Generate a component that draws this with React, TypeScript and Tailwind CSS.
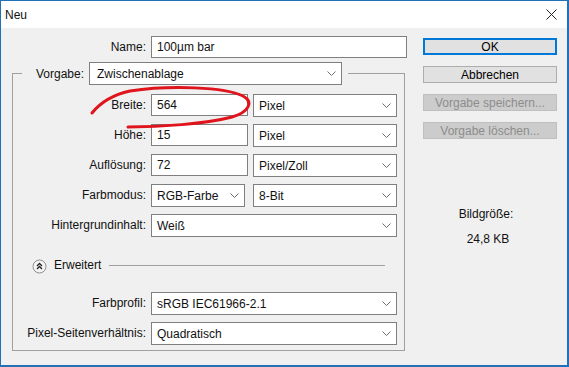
import type { ReactNode } from 'react';

const Chevron = () => (
  <svg width="9" height="5" viewBox="0 0 9 5" className="shrink-0">
    <path d="M0.5 0.5 L4.5 4.5 L8.5 0.5" fill="none" stroke="#6e6e6e" strokeWidth="1" />
  </svg>
);

const Select = ({ value, className }: { value: string; className: string }) => (
  <div
    className={`flex h-[23px] items-center justify-between border border-[#7f7f7f] bg-white pl-[5px] pr-[5px] ${className}`}>
    <span>{value}</span>
    <Chevron />
  </div>
);

const Input = ({ value, className }: { value: string; className: string }) => (
  <div className={`flex h-[22px] items-center border border-[#7f7f7f] bg-white pl-[5px] ${className}`}>{value}</div>
);

const Row = ({ label, children }: { label: string; children: ReactNode }) => (
  <div className="flex h-[23px] items-start">
    <span className="flex h-[22px] w-[133px] items-center justify-end">{label}</span>
    <div className="ml-[5px] flex items-start">{children}</div>
  </div>
);

const Button = ({ label, kind }: { label: string; kind: 'default' | 'normal' | 'disabled' }) => {
  const styles = {
    default: 'border-2 border-[#0078d7] bg-[#e1e1e1] text-black',
    normal: 'border border-[#adadad] bg-[#e1e1e1] text-black',
    disabled: 'border border-[#bfbfbf] bg-[#cccccc] text-[#8c8c8c]',
  };
  return <div className={`flex h-[17px] items-center justify-center ${styles[kind]}`}>{label}</div>;
};

export default function App() {
  return (
    <div className="relative flex h-[367px] w-[569px] flex-col border-t border-r-2 border-b-2 border-l border-[#2171b9] bg-[#f0f0f0] font-['Segoe_UI','Liberation_Sans',Arial,sans-serif] text-[12px] text-[#111]">
      {/* title bar */}
      <div className="flex h-[27px] items-center justify-between bg-white pl-[4px] pr-[10px]">
        <span>Neu</span>
        <svg width="11" height="11" viewBox="0 0 11 11">
          <path d="M0.5 0.5 L10.5 10.5 M10.5 0.5 L0.5 10.5" stroke="#222" strokeWidth="1" />
        </svg>
      </div>

      <div className="flex flex-1">
        {/* left */}
        <div className="flex w-[406px] flex-col">
          <div className="mt-[8px] flex h-[22px] items-center">
            <span className="w-[145px] text-right">Name:</span>
            <Input value="100µm bar" className="ml-[5px] w-[256px]" />
          </div>

          <fieldset className="mt-[4px] ml-[11px] w-[393px] border border-[#a0a0a0] pb-[5px]">
            <legend className="mt-[4px] ml-[9px]">
              <div className="flex items-center pr-[6px]">
                <span className="w-[62px] text-right">Vorgabe:</span>
                <Select value="Zwischenablage" className="ml-[5px] w-[253px] pl-[7px]" />
              </div>
            </legend>

            <div className="mt-[9px] flex flex-col gap-[7px]">
              <Row label="Breite:">
                <Input value="564" className="w-[97px]" />
                <Select value="Pixel" className="ml-[5px] w-[144px]" />
              </Row>
              <Row label="Höhe:">
                <Input value="15" className="w-[97px]" />
                <Select value="Pixel" className="ml-[5px] w-[144px]" />
              </Row>
              <Row label="Auflösung:">
                <Input value="72" className="w-[97px]" />
                <Select value="Pixel/Zoll" className="ml-[5px] w-[144px]" />
              </Row>
              <Row label="Farbmodus:">
                <Select value="RGB-Farbe" className="w-[94px]" />
                <Select value="8-Bit" className="ml-[8px] w-[144px]" />
              </Row>
              <Row label="Hintergrundinhalt:">
                <Select value="Weiß" className="w-[246px]" />
              </Row>
            </div>

            <div className="mt-[21px] flex h-[14px] items-center">
              <svg width="15" height="15" viewBox="0 0 15 15" className="ml-[19px] mt-[3px] shrink-0">
                <circle cx="7.5" cy="7.5" r="6.5" fill="#f4f4f4" stroke="#8f8f8f" />
                <path d="M5 7 L7.5 4.5 L10 7 M5 10 L7.5 7.5 L10 10" fill="none" stroke="#222" strokeWidth="1.3" />
              </svg>
              <span className="ml-[7px] w-[50px]">Erweitert</span>
              <div className="ml-[5px] h-px w-[276px] bg-[#a0a0a0]" />
            </div>

            <div className="mt-[20px] flex flex-col gap-[7px]">
              <Row label="Farbprofil:">
                <Select value="sRGB IEC61966-2.1" className="w-[246px]" />
              </Row>
              <Row label="Pixel-Seitenverhältnis:">
                <Select value="Quadratisch" className="w-[246px]" />
              </Row>
            </div>
          </fieldset>
        </div>

        {/* right */}
        <div className="mt-[10px] ml-[16px] flex w-[134px] flex-col">
          <div className="flex flex-col gap-[11px]">
            <Button label="OK" kind="default" />
            <Button label="Abbrechen" kind="normal" />
            <Button label="Vorgabe speichern..." kind="disabled" />
            <Button label="Vorgabe löschen..." kind="disabled" />
          </div>
          <div className="mt-[67px] flex flex-col items-center gap-[9px] leading-[16px]">
            <span className="pr-[8px]">Bildgröße:</span>
            <span className="pr-[4px]">24,8 KB</span>
          </div>
        </div>
      </div>

      {/* red annotation */}
      <svg className="pointer-events-none absolute top-[-1px] left-[-1px]" width="569" height="367" viewBox="0 0 569 367">
        <path
          d="M92 113 C100 103 112 95 130 91 C170 85 225 87 243 96 C254 102 249 112 232 117 C205 124 160 127 128 127"
          fill="none"
          stroke="#e0141c"
          strokeWidth="3"
          strokeLinecap="round"
        />
      </svg>
    </div>
  );
}
